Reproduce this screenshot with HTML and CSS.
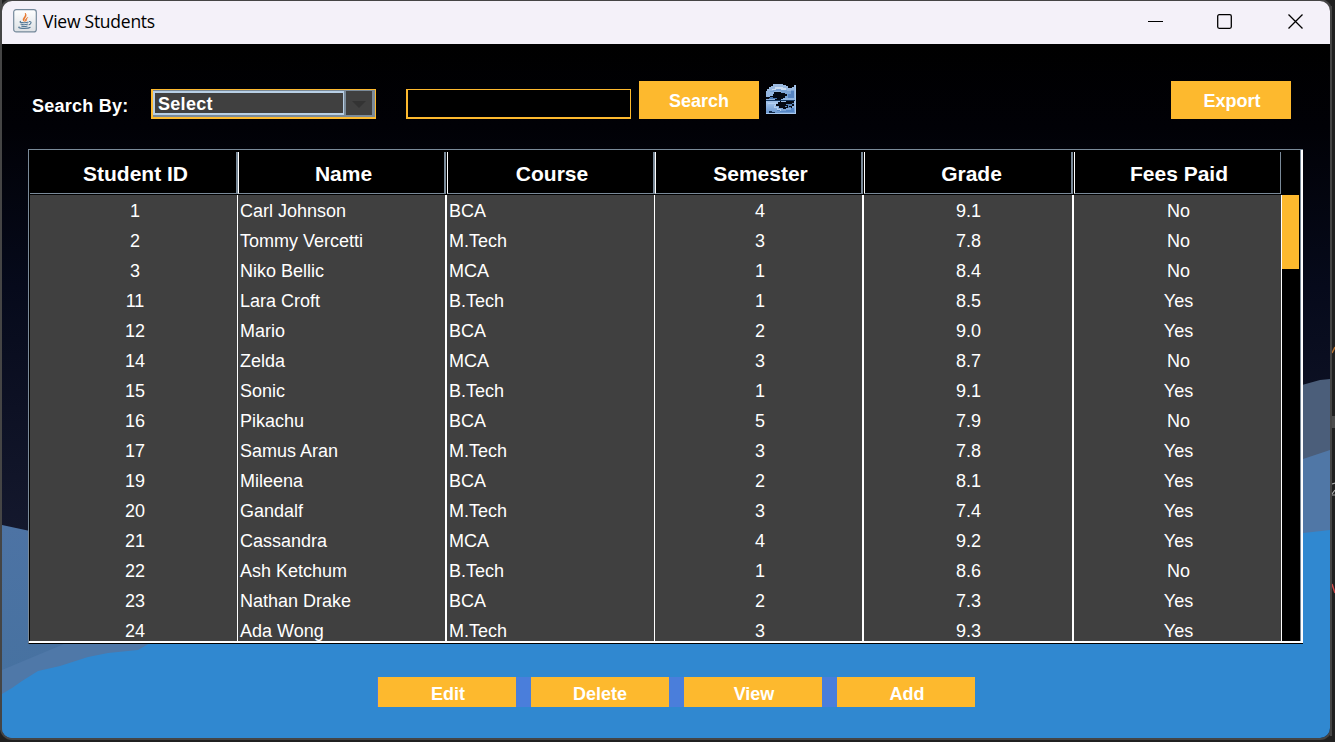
FILE: index.html
```html
<!DOCTYPE html>
<html lang="en">
<head>
<meta charset="utf-8">
<title>View Students</title>
<link rel="stylesheet" href="styles.css">
</head>
<body>
<svg class="desktop" viewBox="0 0 1335 742" aria-hidden="true">
  <rect width="1335" height="742" fill="#202020"/>
  <rect width="2" height="730" fill="#4b4b4b"/>
  <rect x="1330" y="6" width="2" height="730" fill="#484848"/>
  <rect x="1332" y="416" width="3" height="12" fill="#4c4c4c"/>
  <path d="M0 32h2M0 43h2M0 518h2M0 532h2M0 590h2M0 620h2M0 626h2M0 652h2M0 659h2M0 686h2M0 692h2M0 719h2M0 725h2" stroke="#a45b55"/>
  <path d="M0 216h2M0 221h2M0 227h2" stroke="#8796a8"/>
  <path d="M1332 353l3-6" stroke="#b87333" stroke-width="1.5"/>
  <path d="M1332 584l3 9" stroke="#d14b4b" stroke-width="1.5"/>
  <path d="M1332 484l3-1M1332 495h3M1332 494l3-4" stroke="#aaa" stroke-width="1.2"/>
</svg>
<main class="window">
  <header class="titlebar">
    <svg class="java" viewBox="0 0 24 24">
      <defs><linearGradient id="tile" x2="0" y2="1"><stop stop-color="#fff"/><stop offset="1" stop-color="#dce0e4"/></linearGradient></defs>
      <rect x=".7" y=".7" width="22.6" height="22.2" rx="2.5" fill="url(#tile)" stroke="#75899b" stroke-width="1.2"/>
      <path d="M11.300 12.500C7.800 9.500 13.500 8 12.300 4.200C15 7.500 9.800 9.300 11.300 12.500Z" fill="#e76f1e" stroke="#e76f1e" stroke-width=".7"/>
      <path d="M12.800 12.500C11.300 11 12.700 9.500 15 8.200C12.800 10.300 14.300 11 12.800 12.500Z" fill="#e76f1e" stroke="#e76f1e" stroke-width=".4"/>
      <path d="M8 12.300C4 13.800 13 14.200 15.500 13M7.500 15Q11 16.500 15 15M8.300 17Q11 18 14.500 16.900M16 12.500C19.500 12.200 18 15.500 15.700 15.900M6.500 17.700C2.500 19.300 14.500 20.300 17.500 18.200" fill="none" stroke="#557996" stroke-width="1.1"/>
    </svg>
    <h1 class="title">View Students</h1>
    <svg class="controls" viewBox="0 0 156 16" fill="none" stroke="#000" stroke-width="1.3">
      <path d="M0 8.500h15" stroke-width="1"/>
      <rect x="69.700" y="1.700" width="13.600" height="13.600" rx="1.500"/>
      <path d="M140.500 1.500l14 14M154.500 1.500l-14 14"/>
    </svg>
  </header>
  <section class="content">
    <svg class="scenery" viewBox="2 44 1328 694" preserveAspectRatio="none">
      <defs>
        <linearGradient id="sky" x2="0" y2="1"><stop stop-color="#000"/><stop offset=".12" stop-color="#010106"/><stop offset=".35" stop-color="#060a1b"/><stop offset=".7" stop-color="#14182d"/><stop offset="1" stop-color="#171b34"/></linearGradient>
        <linearGradient id="hill" x2="0" y2="1"><stop stop-color="#4d73a4"/><stop offset="1" stop-color="#44719f"/></linearGradient>
      </defs>
      <rect x="2" y="44" width="1328" height="694" fill="url(#sky)"/>
      <path d="M2 525L30 531L200 570V738H2Z" fill="url(#hill)"/>
      <path d="M2 670L64 644L200 590V738H2Z" fill="#4f78a8"/>
      <path d="M1200 400L1302 385L1320 380L1330 379V600H1200Z" fill="#4b5e7a"/>
      <path d="M1200 490L1303 459L1330 450V600H1200Z" fill="#5077a6"/>
      <path d="M2 694L12 688L22 681L38 671L60 666L88 657L108 653L138 650L155 640L200 600L1200 545L1303 533L1330 530V738H2Z" fill="#3088d0"/>
    </svg>
    <form class="toolbar">
      <label class="search-label">Search By:</label>
      <div class="select">
        <span class="select-value">Select</span>
        <span class="select-button"><svg viewBox="0 0 14 7"><path d="M0 0h14L7 7Z" fill="#333"/></svg></span>
      </div>
      <input class="search-field" type="text" aria-label="Search text">
      <button class="btn search" type="button">Search</button>
      <svg class="refresh" viewBox="0 0 30 30" shape-rendering="crispEdges">
        <defs><linearGradient id="ice" x2="0" y2="1"><stop stop-color="#9dbbe0"/><stop offset=".5" stop-color="#8fb4e0"/><stop offset=".62" stop-color="#a4c4ea"/><stop offset="1" stop-color="#6593cd"/></linearGradient></defs>
        <path d="M0 30V7H1V5H3V3H5V2H7V0H17V1H20V2H22V4H26V3H28V1H30V30Z" fill="url(#ice)"/>
        <path d="M4 7H7V5H18V6H21V7H25V6H28V9H25V12H22V14H18V9H15V7H8V8H4Z" fill="#7ba3d5"/>
        <path d="M6 5H9V3H17V4H20V6H15V5H10V6H6Z" fill="#cadbf0"/>
        <path d="M22 14V10H25V7H28V14Z" fill="#5583c0"/>
        <path d="M0 13H4V12H7V10H8V8H15V9H19V10H21V12H19V14H17V15H15V18H20V17H28V22H26V24H20V25H17V24H13V22H10V20H12V18H14V16H9V15H0Z" fill="#050a14"/>
        <path d="M4 13H7V14H11V15H3Z" fill="#4c78b1"/>
        <path d="M0 16H30" stroke="#153963" stroke-width="1"/>
        <path d="M20 20h5v1h-3v2h3M26 19h2M21 22h-2" fill="none" stroke="#5b86ba"/>
        <path d="M2 19H9V21H8V23H11V25H14V27" fill="none" stroke="#b4d0ef"/>
        <path d="M11 26H14V27H20V26H25V24H28V28H14V27H11Z" fill="#5586c5"/>
        <path d="M3 29V27H6V28H9V29Z" fill="#10294a"/>
        <path d="M29.500 1V30M0 29.500H30" stroke="#a9c9ee"/>
      </svg>
      <button class="btn export" type="button">Export</button>
    </form>
    <div class="frame">
      <div class="grid head">
        <div>Student ID</div><div>Name</div><div>Course</div><div>Semester</div><div>Grade</div><div>Fees Paid</div>
      </div>
      <div class="viewport">
        <div class="columns">
          <div class="col center id"><span>1</span><span>2</span><span>3</span><span>11</span><span>12</span><span>14</span><span>15</span><span>16</span><span>17</span><span>19</span><span>20</span><span>21</span><span>22</span><span>23</span><span>24</span></div>
          <div class="col thick"><span>Carl Johnson</span><span>Tommy Vercetti</span><span>Niko Bellic</span><span>Lara Croft</span><span>Mario</span><span>Zelda</span><span>Sonic</span><span>Pikachu</span><span>Samus Aran</span><span>Mileena</span><span>Gandalf</span><span>Cassandra</span><span>Ash Ketchum</span><span>Nathan Drake</span><span>Ada Wong</span></div>
          <div class="col"><span>BCA</span><span>M.Tech</span><span>MCA</span><span>B.Tech</span><span>BCA</span><span>MCA</span><span>B.Tech</span><span>BCA</span><span>M.Tech</span><span>BCA</span><span>M.Tech</span><span>MCA</span><span>B.Tech</span><span>BCA</span><span>M.Tech</span></div>
          <div class="col center thick"><span>4</span><span>3</span><span>1</span><span>1</span><span>2</span><span>3</span><span>1</span><span>5</span><span>3</span><span>2</span><span>3</span><span>4</span><span>1</span><span>2</span><span>3</span></div>
          <div class="col center thick grade"><span>9.1</span><span>7.8</span><span>8.4</span><span>8.5</span><span>9.0</span><span>8.7</span><span>9.1</span><span>7.9</span><span>7.8</span><span>8.1</span><span>7.4</span><span>9.2</span><span>8.6</span><span>7.3</span><span>9.3</span></div>
          <div class="col center fees"><span>No</span><span>No</span><span>No</span><span>Yes</span><span>Yes</span><span>No</span><span>Yes</span><span>No</span><span>Yes</span><span>Yes</span><span>Yes</span><span>Yes</span><span>No</span><span>Yes</span><span>Yes</span></div>
        </div>
        <div class="scrollbar"><div class="thumb"></div></div>
      </div>
    </div>
    <footer class="actions">
      <button class="btn" type="button">Edit</button><button class="btn delete" type="button">Delete</button><button class="btn" type="button">View</button><button class="btn" type="button">Add</button>
    </footer>
  </section>
</main>
</body>
</html>
```
FILE: styles.css
```css
* { box-sizing: border-box; }
body {
  margin: 0;
  width: 1335px;
  height: 742px;
  overflow: hidden;
  padding: 1px 0 0 2px;
  background: #202020;
  color: #fff;
  font: 18px/30px "Liberation Sans", Arial, sans-serif;
}
.desktop { position: absolute; inset: 0; width: 1335px; height: 742px; z-index: -1; }
.window {
  width: 1328px;
  height: 737px;
  border-radius: 10px;
  overflow: hidden;
  box-shadow: 0 0 0 2px #454545;
}
.titlebar {
  height: 43px;
  padding: 0 26px 4px 11px;
  display: flex;
  align-items: center;
  background: #f4f1f9;
  color: #000;
}
.java { width: 24px; height: 24px; flex: none; }
.title {
  margin: 0 auto 0 6px;
  font: 400 17.5px/24px "Open Sans", "Noto Sans", sans-serif;
  letter-spacing: -.25px;
}
.controls { width: 156px; height: 16px; }
.content { height: 694px; position: relative; isolation: isolate; }
.scenery { position: absolute; inset: 0; width: 100%; height: 100%; z-index: -1; }
.toolbar {
  height: 105px;
  padding: 37px 39px 0 30px;
  display: flex;
  align-items: flex-start;
}
.search-label { width: 119px; margin-top: 10px; font-weight: 700; letter-spacing: .25px; }
.select {
  width: 225px;
  height: 30px;
  margin: 8px 30px 0 0;
  border: solid #fdb92e;
  border-width: 1px 1px 2px 2px;
  background: #7a8a99;
  display: flex;
  gap: 2px;
  padding-top: 1px;
}
.select-value {
  width: 191px;
  height: 24px;
  border: 2px solid #b8cfe5;
  border-right-width: 1px;
  background: #404040;
  padding-left: 3px;
  font-weight: 700;
  letter-spacing: .3px;
  line-height: 22px;
}
.select-button { width: 26px; height: 24px; background: #404040; display: flex; align-items: center; justify-content: center; padding-top: 3px; }
.select-button svg { width: 14px; height: 7px; }
.search-field {
  width: 225px;
  height: 30px;
  margin: 8px 8px 0 0;
  padding: 0 4px;
  border: solid #fdb92e;
  border-width: 1px 1px 2px 2px;
  background: #000;
  color: #fff;
  font: inherit;
}
.btn {
  border: 0;
  padding: 0;
  background: #fdb92e;
  color: #fff;
  font: 700 18px/30px "Liberation Sans", Arial, sans-serif;
}
.search, .export { width: 120px; height: 38px; padding-top: 2px; }
.search { margin-right: 7px; }
.refresh { width: 30px; height: 30px; margin-top: 3px; }
.export { margin-left: auto; padding-left: 2px; }
.frame {
  width: 1275px;
  height: 495px;
  margin-left: 26px;
  border: solid #7a8a99;
  border-width: 1px 0 0 1px;
  border-bottom: 1px solid #000;
  padding-left: 1px;
  background: #000;
  box-shadow: inset -2px -2px #fff, inset -3px 0 #7a8a99;
}
.grid { display: grid; grid-template-columns: 208px 209px 208px 209px 210px 207px; }
.head {
  width: 1251px;
  height: 45px;
  padding: 2px 0 1px;
  grid-template-rows: 42px;
  align-content: start;
  font: 700 21px/41px "Liberation Sans", Arial, sans-serif;
  text-align: center;
}
.head div { border: solid #7a8a99; border-width: 0 2px 1px 0; padding: 2px 0 0 3px; line-height: 40px; }
.head div:not(:first-child) { border-left: 1px solid #fff; }
.head div:first-child { padding-left: 5px; }
.head div:nth-child(2), .head div:nth-child(4), .head div:nth-child(5) { margin-right: 1px; }
.head div:nth-child(2), .head div:nth-child(4) { padding-left: 4px; }
.head div:nth-child(5) { padding-left: 7px; }
.head div:last-child { border-right-width: 1px; }
.viewport { height: 446px; display: flex; overflow: hidden; width: 1269px; }
.columns { display: grid; grid-template-columns: 208px 209px 208px 209px 210px 208px; background: #404040; flex: none; }
.col { border-right: 1px solid #fff; padding-left: 2px; }
.col span { display: block; height: 30px; line-height: 32px; white-space: nowrap; }
.thick { border-right-width: 2px; }
.center { text-align: center; padding-left: 3px; }
.id { padding-left: 3px; }
.grade { padding-left: 1px; }
.fees { padding-left: 2px; }
.scrollbar { width: 17px; background: #000; }
.thumb { height: 74px; background: #fdb92e; }
.actions {
  width: 598px;
  margin: 33px 0 0 375px;
  padding-left: 1px;
  display: flex;
  gap: 15px;
  background: #4a7edb;
}
.actions .btn { width: 138px; height: 30px; padding: 2px 0 0 2px; }
.actions .delete { padding-left: 0; }
```
